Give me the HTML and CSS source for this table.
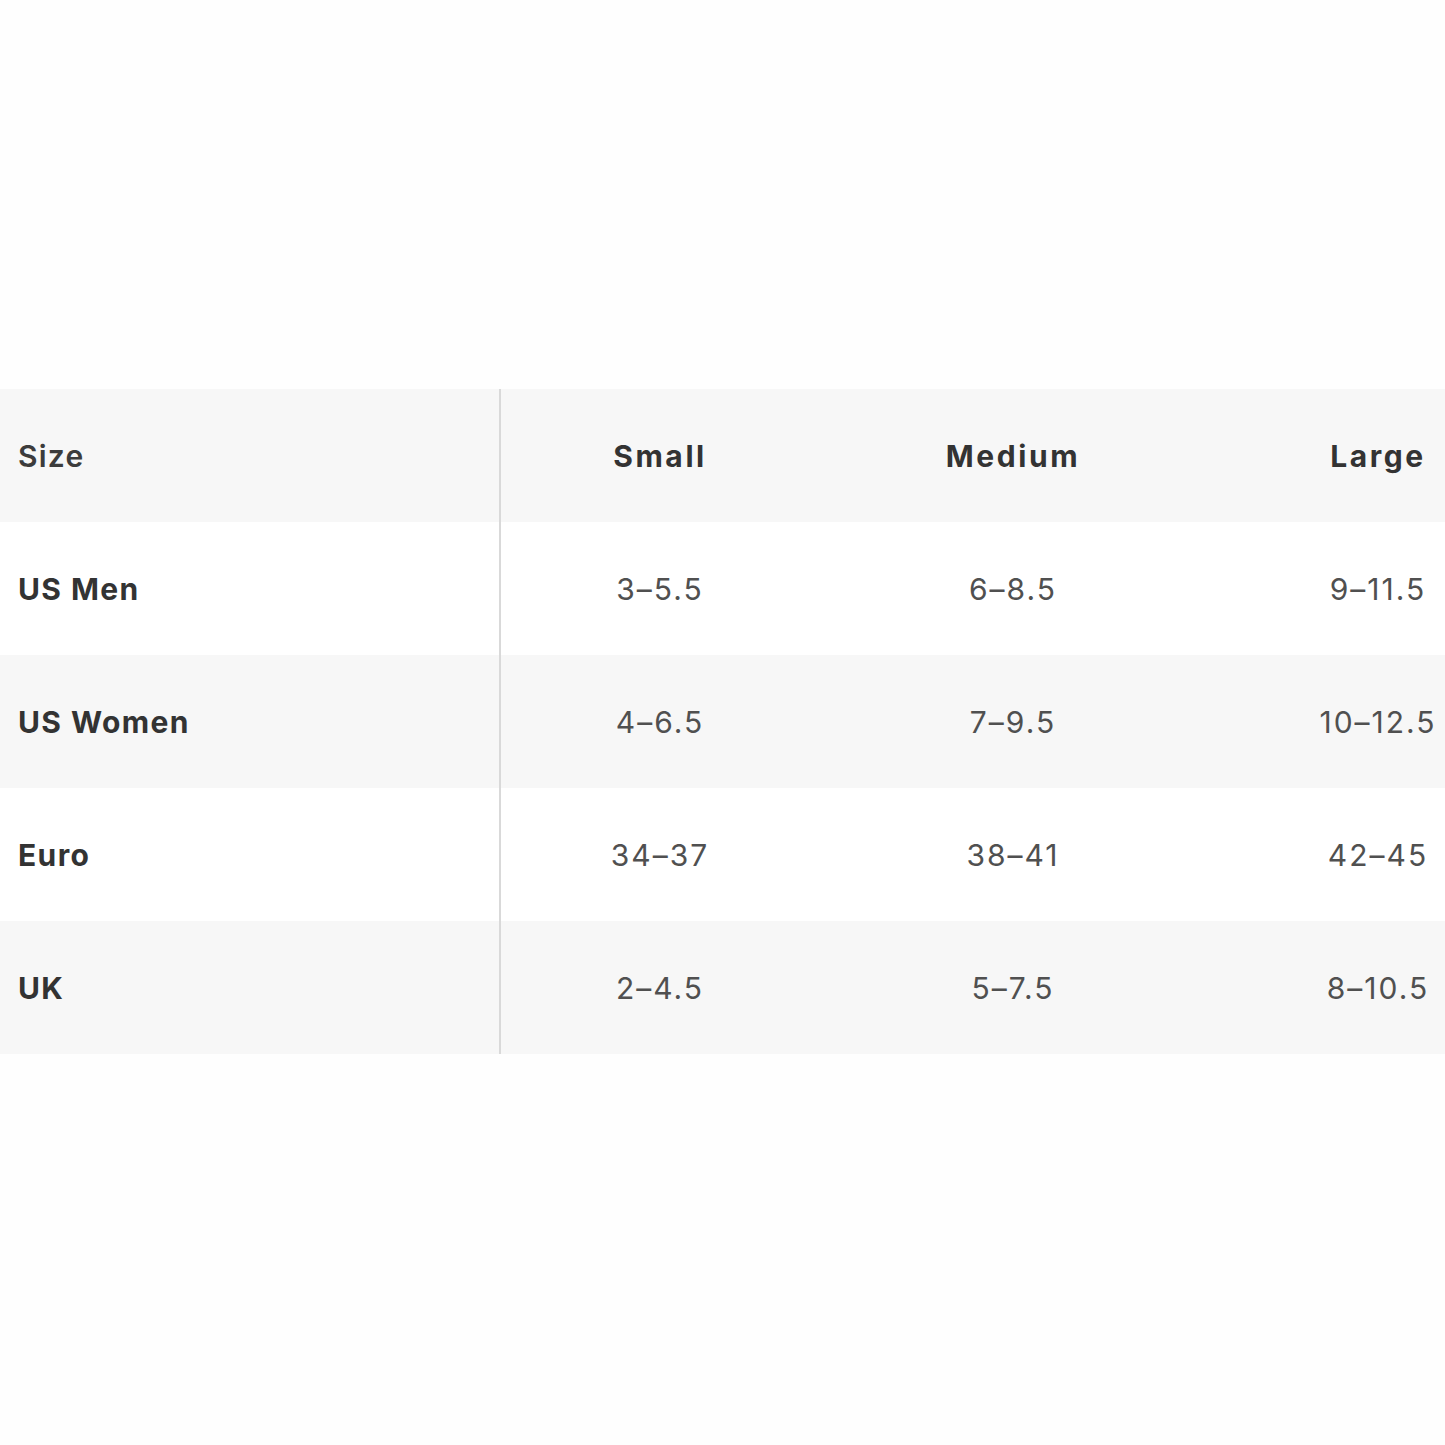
FILE: index.html
```html
<!DOCTYPE html>
<html lang="en">
<head>
<meta charset="utf-8">
<title>Size chart</title>
<link rel="stylesheet" href="styles.css">
</head>
<body>
<div class="page">
  <div class="chart">
    <div class="row head">
      <div class="cell label">Size</div>
      <div class="cell">Small</div>
      <div class="cell">Medium</div>
      <div class="cell">Large</div>
    </div>
    <div class="row">
      <div class="cell label">US Men</div>
      <div class="cell">3–5.5</div>
      <div class="cell">6–8.5</div>
      <div class="cell">9–11.5</div>
    </div>
    <div class="row shade">
      <div class="cell label">US Women</div>
      <div class="cell">4–6.5</div>
      <div class="cell">7–9.5</div>
      <div class="cell">10–12.5</div>
    </div>
    <div class="row">
      <div class="cell label">Euro</div>
      <div class="cell">34–37</div>
      <div class="cell">38–41</div>
      <div class="cell">42–45</div>
    </div>
    <div class="row shade">
      <div class="cell label">UK</div>
      <div class="cell">2–4.5</div>
      <div class="cell">5–7.5</div>
      <div class="cell">8–10.5</div>
    </div>
  </div>
</div>
</body>
</html>
```
FILE: styles.css
```css
html, body {
  margin: 0;
  padding: 0;
  background: #fefefe;
}
.page {
  width: 1445px;
  height: 1445px;
  overflow: hidden;
  padding-top: 389px;
  box-sizing: border-box;
  font-family: Inter, "Open Sans", sans-serif;
}
.chart {
  width: 1549px;
}
.row {
  display: grid;
  grid-template-columns: 501px 318px 388px 342px;
  height: 133px;
  background: #ffffff;
}
.row.head, .row.shade {
  background: #f7f7f7;
}
.cell {
  display: flex;
  align-items: center;
  justify-content: center;
  font-size: 30px;
  color: #505050;
  letter-spacing: 2px;
}
.cell.label {
  justify-content: flex-start;
  padding-left: 18px;
  border-right: 2px solid #d9d9d9;
  font-weight: 700;
  color: #333333;
  letter-spacing: 1.4px;
}
.head .cell {
  font-weight: 700;
  color: #333333;
  letter-spacing: 2.6px;
}
.head .cell.label {
  font-weight: 600;
  color: #3c3c3c;
  letter-spacing: 1.2px;
}
```
